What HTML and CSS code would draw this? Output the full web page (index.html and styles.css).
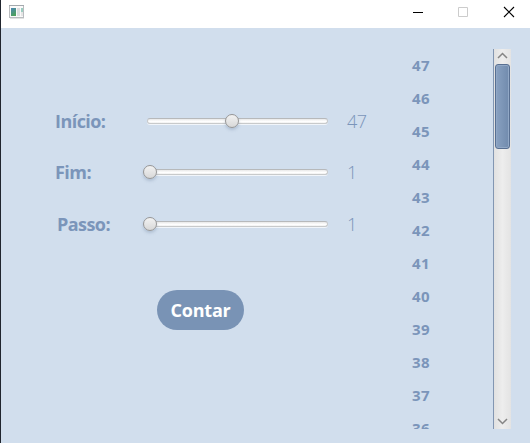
FILE: index.html
```html
<!DOCTYPE html>
<html lang="pt">
<head>
<meta charset="utf-8">
<title>Contador</title>
<link rel="stylesheet" href="styles.css">
</head>
<body>
<div class="window">
  <header class="titlebar">
    <svg class="app-icon" width="16" height="14" viewBox="0 0 16 14">
      <defs><linearGradient id="g" x1="0" y1="0" x2=".4" y2="1"><stop offset="0" stop-color="#4b86b4"/><stop offset="1" stop-color="#4da05e"/></linearGradient></defs>
      <rect x=".5" y=".5" width="14" height="12" fill="#fafafa" stroke="#b9bcbf"/>
      <path d="M0 .5h15" stroke="#a4a9ad"/><path d="M1 13.5h14" stroke="#e2e2e2"/>
      <rect x="2" y="3" width="5" height="8" fill="url(#g)"/>
      <rect x="8" y="3" width="3" height="8" fill="#dcdedf"/>
      <rect x="12" y="3" width="2" height="4" fill="#9bcdc0"/><rect x="12" y="7" width="2" height="4" fill="#e5e5e5"/>
    </svg>
    <div class="controls">
      <svg width="10" height="10" viewBox="0 0 10 10"><path d="M0 5.500h10" stroke="#000"/></svg>
      <svg width="10" height="10" viewBox="0 0 10 10"><path d="M.5.5h9v9h-9z" fill="none" stroke="#ccc"/></svg>
      <svg class="close" width="10" height="10" viewBox="0 0 10 10"><path d="M0 0l10 10M10 0L0 10" stroke="#000" stroke-width="1.1"/></svg>
    </div>
  </header>
  <main class="content">
    <section class="form">
      <div class="row">
        <span class="label">Início:</span>
        <div class="slider mid"><div class="track"></div><div class="thumb"></div></div>
        <span class="value">47</span>
      </div>
      <div class="row">
        <span class="label">Fim:</span>
        <div class="slider"><div class="track"></div><div class="thumb"></div></div>
        <span class="value">1</span>
      </div>
      <div class="row last">
        <span class="label indent">Passo:</span>
        <div class="slider"><div class="track"></div><div class="thumb"></div></div>
        <span class="value">1</span>
      </div>
      <button class="count">Contar</button>
    </section>
    <section class="list">
      <ul class="items">
        <li>47</li><li>46</li><li>45</li><li>44</li><li>43</li><li>42</li><li>41</li><li>40</li><li>39</li><li>38</li><li>37</li><li>36</li>
      </ul>
      <div class="scrollbar">
        <svg class="arrow" width="11" height="7" viewBox="0 0 11 7"><path d="M1 6l4.500-4.500L10 6" fill="none" stroke="#858585" stroke-width="1.500"/></svg>
        <div class="handle"></div>
        <svg class="arrow down" width="11" height="7" viewBox="0 0 11 7"><path d="M1 1l4.500 4.500L10 1" fill="none" stroke="#858585" stroke-width="1.500"/></svg>
      </div>
    </section>
  </main>
</div>
</body>
</html>
```
FILE: styles.css
```css
* { box-sizing: border-box; }
body { margin: 0; overflow: hidden; font-family: "Open Sans", "Noto Sans", sans-serif; }
.window { width: 530px; height: 443px; border-left: 1px solid #20252e; display: flex; flex-direction: column; background: #d1deed; color: #7b95ba; }
.titlebar { height: 28px; flex: none; background: #fff; display: flex; justify-content: space-between; padding: 5px 16px 0 8px; }
.controls { display: flex; gap: 35px; padding-top: 2px; }
.close { margin-left: 1px; overflow: visible; }
svg { display: block; }
.content { flex: 1; display: flex; min-height: 0; }
.form { width: 406px; padding: 78px 0 0 54px; }
.row { display: flex; align-items: center; height: 30px; margin-bottom: 21px; }
.row:nth-child(2) { margin-bottom: 22px; }
.row.last { margin-bottom: 0; }
.label { width: 89px; font-size: 18px; font-weight: 700; letter-spacing: -.55px; line-height: 24px; }
.indent { padding-left: 2px; }
.slider { width: 187px; height: 14px; padding: 0 3px; display: grid; align-items: center; }
.slider > * { grid-area: 1 / 1; }
.track { height: 6px; border-radius: 3px; border: 1px solid #c8cacb; border-top-color: #b7b9bb; background: linear-gradient(#e8e8e8, #fff 60%, #f0f0f0); box-shadow: 0 1px 0 #f1f5fa; }
.thumb { width: 14px; height: 14px; margin-left: -4px; border: 1px solid #969696; border-radius: 50%; background: linear-gradient(#f2f2f2, #d8d8d8); box-shadow: 0 2px 3px #8094ad66; }
.mid .thumb { margin-left: 78px; }
.value { margin-left: 16px; font-size: 18px; font-weight: 300; line-height: 24px; letter-spacing: -.5px; }
.count { display: block; width: 87px; height: 40px; margin: 51px 0 0 102px; padding: 0; border: 0; border-radius: 20px; background: #7993b5; color: #fff; font: 700 18px/40px "Open Sans", sans-serif; letter-spacing: -.2px; }
.list { width: 104px; height: 380px; margin-top: 21px; display: flex; justify-content: space-between; overflow: hidden; }
.items { list-style: none; margin: 0; padding: 0 0 0 5px; }
.items li { height: 33px; font-size: 15px; font-weight: 700; line-height: 33px; letter-spacing: .4px; }
.scrollbar { width: 18px; border-left: 1px solid #8296b2; background: linear-gradient(90deg, #e1e1e1, #ededed 50%, #e3e3e3); display: flex; flex-direction: column; align-items: center; padding: 3px 0 4px; }
.handle { width: 15px; height: 85px; margin-top: 5px; border: 1px solid #586f91; border-radius: 3px; background: linear-gradient(90deg, #89a1c1, #718bad); box-shadow: inset 0 0 0 1px #91a8c6; }
.down { margin-top: auto; }
```
